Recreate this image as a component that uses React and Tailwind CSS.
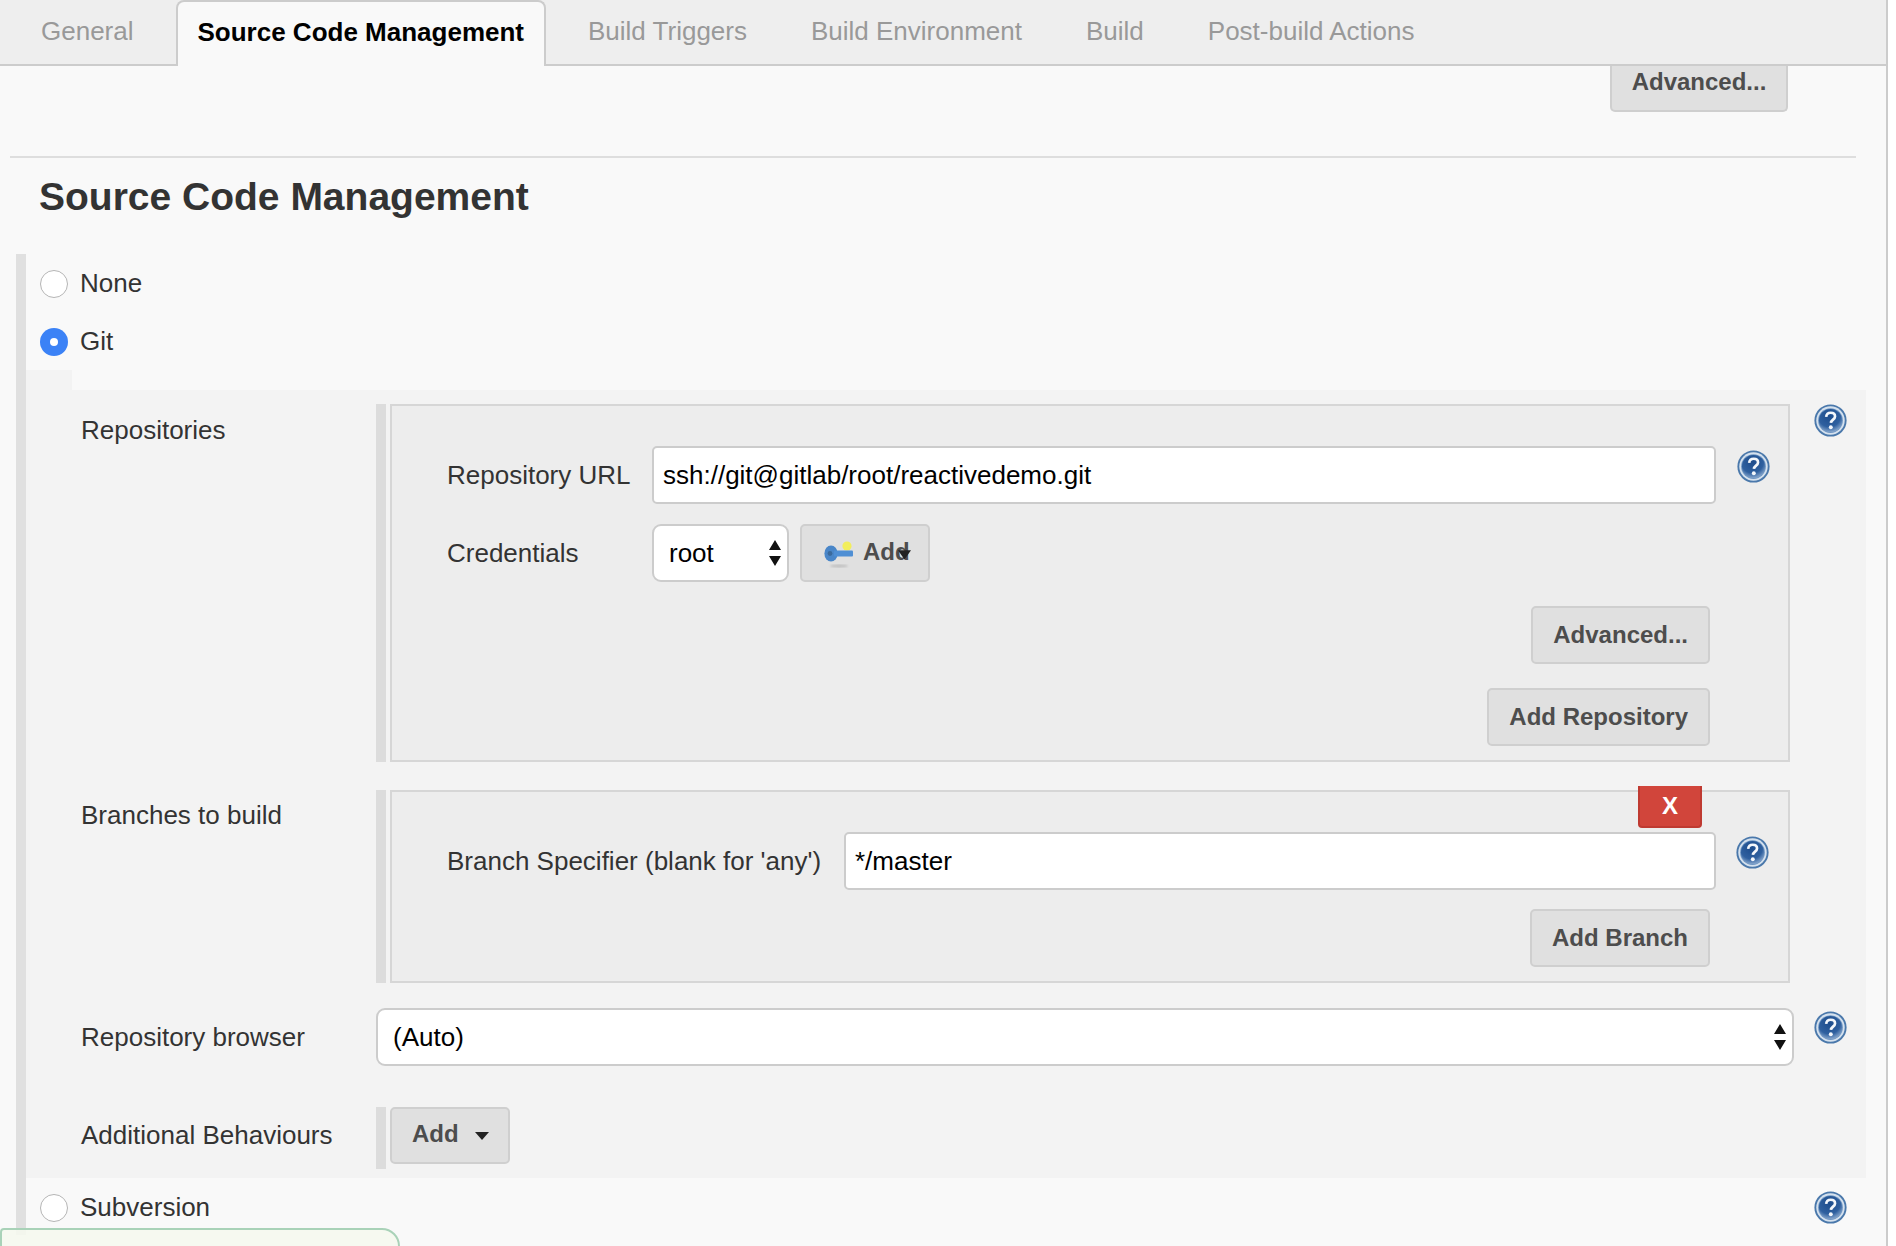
import React from "react";

function Help({ className = "" }) {
  const id = React.useId();
  return (
    <svg viewBox="0 0 32 32" className={"w-[33px] h-[33px] shrink-0 " + className}>
      <defs>
        <radialGradient id={id} cx="45%" cy="30%" r="80%">
          <stop offset="0%" stopColor="#1d4c8c" />
          <stop offset="60%" stopColor="#2f609f" />
          <stop offset="100%" stopColor="#a9c2df" />
        </radialGradient>
      </defs>
      <circle cx="16" cy="16" r="15.6" fill="#4a78ab" />
      <circle cx="16" cy="16" r="13.8" fill="#d5e1ee" />
      <circle cx="16" cy="16" r="12" fill="#6f96c2" />
      <circle cx="16" cy="16" r="11.2" fill={`url(#${id})`} />
      <path d="M11.8 12.4c.3-2.6 2.2-3.9 4.4-3.9 2.5 0 4.2 1.5 4.2 3.6 0 2.9-3.8 3.1-4 6.2" fill="none" stroke="#f4f7fb" strokeWidth="2.6" />
      <circle cx="16.3" cy="22.6" r="1.9" fill="#f4f7fb" />
    </svg>
  );
}

function Radio({ checked }) {
  return checked ? (
    <span className="w-[28px] h-[28px] rounded-full bg-[#3b82f6] flex items-center justify-center shrink-0">
      <span className="w-[8px] h-[8px] rounded-full bg-white" />
    </span>
  ) : (
    <span className="w-[28px] h-[28px] rounded-full bg-white border border-[#b5b5b5] shrink-0" />
  );
}

function Btn({ children, className = "" }) {
  return (
    <button className={"h-[58px] px-[20px] bg-[#e0e0e0] border-2 border-[#cfcfcf] rounded-[5px] text-[24px] font-bold text-[#4d4d4d] " + className}>
      {children}
    </button>
  );
}

function UpDown() {
  return (
    <svg viewBox="0 0 12 26" className="w-[12px] h-[26px] pointer-events-none absolute right-[8px] top-[16px]">
      <path d="M6 0 12 10H0Z M6 26 0 16H12Z" fill="#111" />
    </svg>
  );
}

function Key() {
  return (
    <svg viewBox="0 0 32 30" className="w-[32px] h-[30px] shrink-0 mt-[3px]">
      <defs>
        <filter id="kb"><feGaussianBlur stdDeviation="0.9" /></filter>
        <filter id="kb2"><feGaussianBlur stdDeviation="0.5" /></filter>
      </defs>
      <ellipse cx="15" cy="26" rx="9" ry="1.5" fill="#bdbdbd" filter="url(#kb)" />
      <circle cx="23" cy="6" r="4.6" fill="#f2ee5c" filter="url(#kb2)" />
      <g filter="url(#kb2)">
        <ellipse cx="7" cy="13.5" rx="6.6" ry="8" fill="#4a86c8" />
        <rect x="10" y="10.5" width="19" height="6" rx="1" fill="#4f8fd4" />
        <circle cx="6" cy="13.5" r="2.4" fill="#3a6a9c" />
      </g>
    </svg>
  );
}

const Tab = ({ children, active }) =>
  active ? (
    <div className="h-[66px] px-[20px] ml-[42px] -mr-[1px] pb-[4px] bg-[#f9f9f9] border-2 border-b-0 border-[#ccc] rounded-t-[8px] flex items-center text-[26px] font-bold text-black">
      {children}
    </div>
  ) : (
    <div className="px-[21px] ml-[22px] pb-[2px] first:ml-0 first:pl-[41px] first:pr-0 flex items-center text-[26px] text-[#999]">{children}</div>
  );

const Field = "h-[58px] bg-white border-2 border-[#ccc] rounded-[5px] text-[26px] text-black outline-none";

function Row({ label, children, labelClass = "" }) {
  return (
    <div className="flex items-start">
      <div className={"w-[295px] shrink-0 text-[26px] text-[#333] " + labelClass}>{label}</div>
      {children}
    </div>
  );
}

export default function App() {
  return (
    <div className="relative w-[1896px] h-[1246px] overflow-hidden bg-white font-['Liberation_Sans',Arial,sans-serif]">
      <div className="w-[1888px] h-full bg-[#f9f9f9] border-r-2 border-[#ccc]">
        <div className="flex h-[66px] bg-[#eeeeee] border-b-2 border-[#ccc]">
          <Tab>General</Tab>
          <Tab active>Source Code Management</Tab>
          <Tab>Build Triggers</Tab>
          <Tab>Build Environment</Tab>
          <Tab>Build</Tab>
          <Tab>Post-build Actions</Tab>
        </div>

        <div className="flex justify-end pr-[98px]">
          <button className="h-[46px] w-[178px] pb-[12px] leading-[24px] bg-[#e0e0e0] border-2 border-t-0 border-[#cfcfcf] rounded-b-[5px] text-[24px] font-bold text-[#4d4d4d]">
            Advanced...
          </button>
        </div>

        <div className="h-[2px] bg-[#dedede] ml-[10px] mr-[30px] mt-[44px]" />

        <h2 className="ml-[39px] mt-[14px] h-[50px] leading-[50px] text-[39px] font-bold text-[#333]">
          Source Code Management
        </h2>

        <div className="ml-[16px] mt-[32px] h-[981px] border-l-[10px] border-[#e0e0e0]">
          <div className="flex items-center gap-[12px] pl-[14px] pt-[10px] text-[26px] text-[#333]">
            <Radio />
            <span>None</span>
          </div>
          <div className="flex items-center gap-[12px] pl-[14px] mt-[19px] text-[26px] text-[#333]">
            <Radio checked />
            <span>Git</span>
          </div>
          <div className="w-[46px] h-[20px] mt-[9px] bg-[#f3f3f3]" />
          <div className="w-[1840px] bg-[#f3f3f3] pl-[55px] pt-[14px] pb-[9px]">
            <Row label="Repositories" labelClass="pt-[7px]">
              <div className="w-[10px] h-[358px] bg-[#dcdcdc] shrink-0" />
              <div className="w-[1400px] h-[358px] ml-[4px] bg-[#ededed] border-2 border-[#d6d6d6] pl-[55px] pt-[40px] shrink-0">
                <div className="flex items-center">
                  <div className="w-[205px] shrink-0 text-[26px] text-[#333]">Repository URL</div>
                  <input readOnly value="ssh://git@gitlab/root/reactivedemo.git" className={Field + " w-[1064px] px-[9px] shrink-0"} />
                  <Help className="ml-[21px] -mt-[17px]" />
                </div>
                <div className="flex items-center mt-[20px]">
                  <div className="w-[205px] shrink-0 text-[26px] text-[#333]">Credentials</div>
                  <div className="relative shrink-0">
                    <select className={Field + " appearance-none w-[137px] pl-[15px] rounded-[9px] block"} defaultValue="root">
                      <option>root</option>
                    </select>
                    <UpDown />
                  </div>
                  <div className="relative ml-[11px] w-[130px] h-[58px] bg-[#e0e0e0] border-2 border-[#cfcfcf] rounded-[5px] flex items-center pl-[22px] gap-[7px] text-[24px] font-bold text-[#4d4d4d]">
                    <Key />
                    <span className="-mt-[3px]">Add</span>
                    <svg viewBox="0 0 14 12" className="w-[13px] h-[12px] absolute left-[96px] top-[22px]"><path d="M0 2H14L7 12Z" fill="#222" /></svg>
                  </div>
                </div>
                <div className="flex justify-end mt-[24px] pr-[78px]">
                  <Btn>Advanced...</Btn>
                </div>
                <div className="flex justify-end mt-[24px] pr-[78px]">
                  <Btn>Add Repository</Btn>
                </div>
              </div>
              <Help className="ml-[24px]" />
            </Row>

            <div className="mt-[28px]">
              <Row label="Branches to build" labelClass="pt-[6px]">
                <div className="w-[10px] h-[193px] bg-[#dcdcdc] shrink-0" />
                <div className="relative w-[1400px] h-[193px] ml-[4px] bg-[#ededed] border-2 border-[#d6d6d6] pl-[55px] pt-[40px] shrink-0">
                  <div className="absolute left-[1246px] -top-[6px] w-[64px] h-[42px] bg-[#d1453b] border-2 border-t-0 border-[#bf3a31] rounded-b-[4px] flex items-center justify-center text-[24px] font-bold text-white">
                    X
                  </div>
                  <div className="flex items-center">
                    <div className="w-[397px] shrink-0 text-[26px] text-[#333]">Branch Specifier (blank for 'any')</div>
                    <input readOnly value="*/master" className={Field + " w-[872px] px-[9px] shrink-0"} />
                    <Help className="ml-[20px] -mt-[17px]" />
                  </div>
                  <div className="flex justify-end mt-[19px] pr-[78px]">
                    <Btn>Add Branch</Btn>
                  </div>
                </div>
              </Row>
            </div>

            <div className="mt-[25px]">
              <Row label="Repository browser" labelClass="pt-[10px]">
                <div className="relative shrink-0">
                  <select className={Field + " appearance-none w-[1418px] pl-[15px] rounded-[9px] block"} defaultValue="(Auto)">
                    <option>(Auto)</option>
                  </select>
                  <UpDown />
                </div>
                <Help className="ml-[20px] mt-[3px]" />
              </Row>
            </div>

            <div className="mt-[41px]">
              <Row label="Additional Behaviours" labelClass="pt-[9px]">
                <div className="w-[10px] h-[62px] bg-[#dcdcdc] shrink-0" />
                <div className="ml-[4px] w-[120px] h-[57px] bg-[#e0e0e0] border-2 border-[#cfcfcf] rounded-[5px] flex items-center pl-[20px] gap-[16px] text-[24px] font-bold text-[#4d4d4d]">
                  <span className="-mt-[3px]">Add</span>
                  <svg viewBox="0 0 14 8" className="w-[14px] h-[8px]"><path d="M0 0H14L7 8Z" fill="#222" /></svg>
                </div>
              </Row>
            </div>
          </div>

          <div className="flex items-center pl-[14px] mt-[10px] w-[1821px] text-[26px] text-[#333]">
            <Radio />
            <span className="ml-[12px]">Subversion</span>
            <Help className="ml-auto" />
          </div>
        </div>
      </div>

      <div className="absolute left-0 top-[1228px] w-[400px] h-[40px] bg-[#f5f8ee]/90 border-2 border-[#a9d2b8] rounded-tr-[18px] rounded-tl-[4px]" />
    </div>
  );
}
